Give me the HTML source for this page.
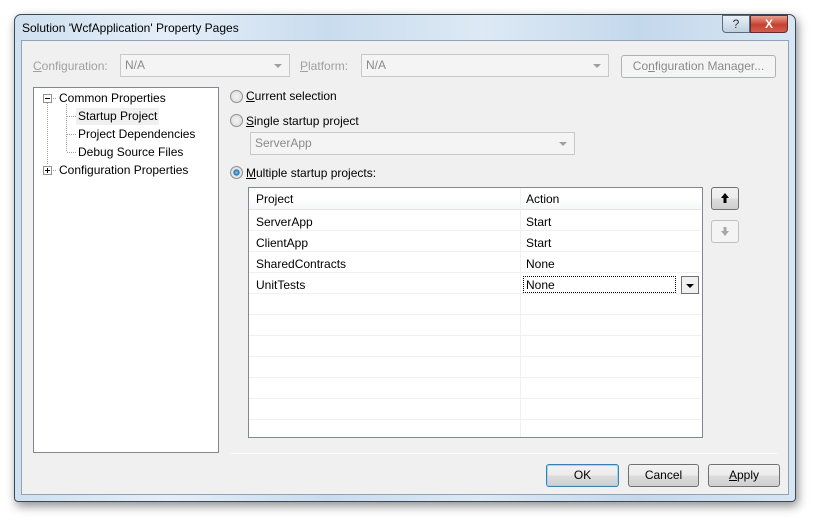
<!DOCTYPE html>
<html><head><style>
*{box-sizing:border-box;margin:0;padding:0}
body{width:814px;height:521px;background:#fff;position:relative;overflow:hidden;font-family:"Liberation Sans",sans-serif;font-size:12px;color:#000}
.a{position:absolute}
.frame{left:14px;top:14px;width:782px;height:488px;border:1px solid #3a4a5a;border-radius:7px 7px 4px 4px;background:linear-gradient(90deg,#cfe0ef 0%,#e4eef8 20%,#c9dcee 40%,#dde9f5 60%,#c4d8ec 80%,#d8e6f3 100%);box-shadow:2px 4px 10px rgba(0,0,0,.45)}
.client{left:21px;top:40px;width:768px;height:455px;background:#f0f0f0;border:1px solid #8ea3b8}
.dis{color:#a0a0a0}
.combo{border:1px solid #c8c8c8;background:#f4f4f4;color:#8a8a8a;padding:3px 4px;height:23px}
.combo:after{content:"";position:absolute;right:7px;top:9px;border:4px solid transparent;border-top:4px solid #a0a0a0;border-bottom:0}
.btn{border:1px solid #707070;border-radius:3px;background:linear-gradient(#f2f2f2 0%,#ebebeb 50%,#dddddd 51%,#cfcfcf 100%);text-align:center;line-height:20px}
.radio{width:13px;height:13px;border-radius:50%;border:1px solid #8e8f8f;background:radial-gradient(#f4f4f4,#d8d8d8)}
u{text-decoration:underline}
.row{position:absolute;left:0;width:452px;height:21px;border-bottom:1px solid #f0f0f0}
.row span{position:absolute;top:5px}
</style></head><body>
<div class="a frame"></div>
<div class="a" style="left:22px;top:21px;font-size:12px">Solution 'WcfApplication' Property Pages</div>
<div class="a" style="left:722px;top:15px;width:28px;height:18px;border:1px solid #5b6b7b;border-radius:0 0 0 4px;background:linear-gradient(#e8f0f8,#c0d0e0);text-align:center;font-size:12px;color:#333;line-height:16px">?</div>
<div class="a" style="left:750px;top:15px;width:38px;height:18px;border:1px solid #5b3030;border-radius:0 0 4px 0;background:linear-gradient(#e8a090,#c84030 55%,#d06050);text-align:center;color:#fff;font-weight:bold;line-height:16px">X</div>
<div class="a client"></div>

<div class="a dis" style="left:33px;top:59px"><u>C</u>onfiguration:</div>
<div class="a combo" style="left:120px;top:54px;width:170px">N/A</div>
<div class="a dis" style="left:300px;top:59px"><u>P</u>latform:</div>
<div class="a combo" style="left:361px;top:54px;width:248px">N/A</div>
<div class="a" style="left:621px;top:55px;width:155px;height:23px;border:1px solid #adb2b5;border-radius:3px;background:#f4f4f4;color:#8a8a8a;text-align:center;line-height:21px">Co<u>n</u>figuration Manager...</div>

<div class="a" style="left:33px;top:87px;width:186px;height:366px;background:#fff;border:1px solid #828790"></div>
<svg class="a" style="left:33px;top:87px" width="186" height="100">
<g stroke="#a0a0a0" stroke-dasharray="1,1" fill="none">
<line x1="14.5" y1="16" x2="14.5" y2="78"/><line x1="18" y1="11.5" x2="24" y2="11.5"/><line x1="18" y1="83.5" x2="24" y2="83.5"/>
<line x1="33.5" y1="17" x2="33.5" y2="65"/><line x1="34" y1="29.5" x2="44" y2="29.5"/><line x1="34" y1="47.5" x2="44" y2="47.5"/><line x1="34" y1="65.5" x2="44" y2="65.5"/></g>
<rect x="10.5" y="7.5" width="8" height="8" fill="#fff" stroke="#919191"/><line x1="12" y1="11.5" x2="17" y2="11.5" stroke="#000"/>
<rect x="10.5" y="79.5" width="8" height="8" fill="#fff" stroke="#919191"/><line x1="12" y1="83.5" x2="17" y2="83.5" stroke="#000"/><line x1="14.5" y1="81" x2="14.5" y2="86" stroke="#000"/>
</svg>
<div class="a" style="left:59px;top:91px">Common Properties</div>
<div class="a" style="left:76px;top:108px;width:83px;height:17px;background:#f0f0f0"></div>
<div class="a" style="left:78px;top:109px">Startup Project</div>
<div class="a" style="left:78px;top:127px">Project Dependencies</div>
<div class="a" style="left:78px;top:145px">Debug Source Files</div>
<div class="a" style="left:59px;top:163px">Configuration Properties</div>

<div class="a radio" style="left:230px;top:90px"></div><div class="a" style="left:246px;top:89px"><u>C</u>urrent selection</div>
<div class="a radio" style="left:230px;top:114px"></div><div class="a" style="left:246px;top:114px"><u>S</u>ingle startup project</div>
<div class="a combo" style="left:250px;top:132px;width:325px">ServerApp</div>
<div class="a radio" style="left:230px;top:166px;background:radial-gradient(#7fd0ff 0,#1a6fb8 35%,#e8e8e8 45%,#d0d0d0)"></div><div class="a" style="left:246px;top:166px"><u>M</u>ultiple startup projects:</div>

<div class="a" style="left:248px;top:187px;width:455px;height:251px;background:#fff;border:1px solid #828790;overflow:hidden">
 <div class="row" style="top:0;height:22px;border-bottom:1px solid #e5e5e5;background:linear-gradient(#fff 50%,#f6f7f9)"><span style="left:7px;top:4px">Project</span><span style="left:277px;top:4px">Action</span></div>
 <div class="row" style="top:22px"><span style="left:7px">ServerApp</span><span style="left:277px">Start</span></div>
 <div class="row" style="top:43px"><span style="left:7px">ClientApp</span><span style="left:277px">Start</span></div>
 <div class="row" style="top:64px"><span style="left:7px">SharedContracts</span><span style="left:277px">None</span></div>
 <div class="row" style="top:85px"><span style="left:7px">UnitTests</span></div>
 <div class="row" style="top:106px"></div><div class="row" style="top:127px"></div><div class="row" style="top:148px"></div><div class="row" style="top:169px"></div><div class="row" style="top:190px"></div><div class="row" style="top:211px"></div><div class="row" style="top:232px"></div>
 <div class="a" style="left:271px;top:0;width:1px;height:251px;background:#f0f0f0"></div>
 <div class="a" style="left:274px;top:88px;width:153px;height:17px;border:1px dotted #000;padding:1px 2px">None</div>
 <div class="a" style="left:432px;top:88px;width:18px;height:18px;border:1px solid #707070;background:#f0f0f0"></div>
 <div class="a" style="left:437px;top:96px;border:4px solid transparent;border-top:4px solid #000;border-bottom:0"></div>
</div>

<div class="a btn" style="left:711px;top:187px;width:28px;height:23px"></div>
<svg class="a" style="left:711px;top:187px" width="28" height="23"><path d="M14 6 L10 11 H12.5 V16 H15.5 V11 H18 Z" fill="#000"/></svg>
<div class="a" style="left:711px;top:220px;width:28px;height:23px;border:1px solid #c0c0c0;border-radius:3px;background:#f4f4f4"></div>
<svg class="a" style="left:711px;top:220px" width="28" height="23"><path d="M14 16 L10 11 H12.5 V7 H15.5 V11 H18 Z" fill="#a8a8a8"/></svg>

<div class="a" style="left:231px;top:453px;width:546px;height:1px;background:#a0a0a0;border-bottom:1px solid #fff"></div>
<div class="a btn" style="left:546px;top:464px;width:73px;height:23px;border-color:#3c7fb1;box-shadow:inset 0 0 0 1px #9ad8f5">OK</div>
<div class="a btn" style="left:628px;top:464px;width:71px;height:23px">Cancel</div>
<div class="a btn" style="left:708px;top:464px;width:72px;height:23px"><u>A</u>pply</div>
</body></html>
